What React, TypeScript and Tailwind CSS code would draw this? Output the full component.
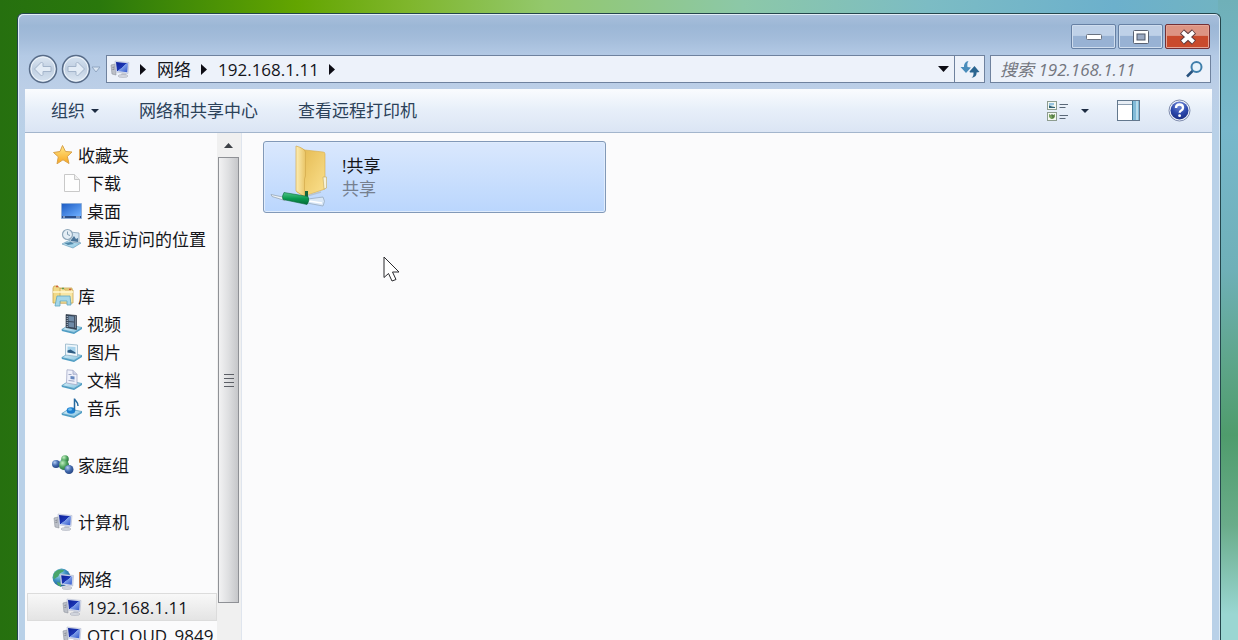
import React from 'react';

const IconDefs = () => (
  <svg className="absolute h-0 w-0" aria-hidden="true">
    <defs>
      <linearGradient id="screen" x1="0" y1="0" x2="1" y2="1">
        <stop offset="0" stopColor="#0b1f96" />
        <stop offset="0.5" stopColor="#1b35b4" />
        <stop offset="0.52" stopColor="#7f9fe8" />
        <stop offset="1" stopColor="#2f55cc" />
      </linearGradient>
      <linearGradient id="desk" x1="0" y1="0" x2="1" y2="1">
        <stop offset="0" stopColor="#1d5cc4" />
        <stop offset="1" stopColor="#6fb0ff" />
      </linearGradient>
      <linearGradient id="star" x1="0" y1="0" x2="0" y2="1">
        <stop offset="0" stopColor="#ffe98a" />
        <stop offset="1" stopColor="#f9a51e" />
      </linearGradient>
      <linearGradient id="tray" x1="0" y1="0" x2="1" y2="1">
        <stop offset="0" stopColor="#e3f5fc" />
        <stop offset="1" stopColor="#7fc0de" />
      </linearGradient>
      <linearGradient id="orb" x1="0" y1="0" x2="0" y2="1">
        <stop offset="0" stopColor="#dfe9f4" />
        <stop offset="0.5" stopColor="#c0cfe1" />
        <stop offset="1" stopColor="#d6e3f1" />
      </linearGradient>
      <linearGradient id="flap" x1="0" y1="0" x2="1" y2="0">
        <stop offset="0" stopColor="#fdeeb4" />
        <stop offset="1" stopColor="#e9c465" />
      </linearGradient>
      <linearGradient id="back" x1="0" y1="0" x2="1" y2="1">
        <stop offset="0" stopColor="#e2b64c" />
        <stop offset="1" stopColor="#fbe18e" />
      </linearGradient>
      <linearGradient id="pipe" x1="0" y1="0" x2="0" y2="1">
        <stop offset="0" stopColor="#4fc486" />
        <stop offset="0.5" stopColor="#0a9a50" />
        <stop offset="1" stopColor="#056b37" />
      </linearGradient>
      <radialGradient id="globe" cx="0.35" cy="0.3" r="0.8">
        <stop offset="0" stopColor="#a9e0f2" />
        <stop offset="0.5" stopColor="#3c8fc0" />
        <stop offset="1" stopColor="#164e86" />
      </radialGradient>
      <radialGradient id="blueBall" cx="0.35" cy="0.3" r="0.8">
        <stop offset="0" stopColor="#b4cdf3" />
        <stop offset="0.5" stopColor="#4169ad" />
        <stop offset="1" stopColor="#233f7b" />
      </radialGradient>
      <radialGradient id="greenBall" cx="0.35" cy="0.3" r="0.8">
        <stop offset="0" stopColor="#c2efc0" />
        <stop offset="0.5" stopColor="#4fa560" />
        <stop offset="1" stopColor="#27683b" />
      </radialGradient>
      <radialGradient id="help" cx="0.5" cy="0.2" r="0.8">
        <stop offset="0" stopColor="#7790dc" />
        <stop offset="0.6" stopColor="#2b47ab" />
        <stop offset="1" stopColor="#1b2f84" />
      </radialGradient>
    </defs>
  </svg>
);

const Computer = () => (
  <svg className="h-[22px] w-[22px] shrink-0" viewBox="0 0 22 22">
    <path d="M2 7l4-1 1 11-4-1z" fill="#bcc0c8" stroke="#8f949e" strokeWidth="0.6" />
    <path d="M3.500 9.500l2-.5M3.500 11.500l2-.5" stroke="#6b707b" strokeWidth="0.7" />
    <path d="M6 3l14 1.500-1 11L7 14z" fill="#dbe2f2" stroke="#b3bbd0" strokeWidth="0.6" />
    <path d="M7 4l12 1.200-.8 9L8 13z" fill="url(#screen)" />
    <path d="M13 14.500l4 .5.500 2.500h-6z" fill="#c6cbd6" />
    <ellipse cx="14" cy="18" rx="5" ry="1.500" fill="#d3d7df" stroke="#a4a9b5" strokeWidth="0.5" />
  </svg>
);

const Star = () => (
  <svg className="h-[22px] w-[22px] shrink-0" viewBox="0 0 22 22">
    <path d="M10.500 1.500l3 6 6.500.500-4.700 4.500 1.700 7-6-3.700-6 4 1.300-7L1.500 8.500l6.500-1z" fill="url(#star)" stroke="#d9a24a" strokeWidth="1" strokeLinejoin="round" />
  </svg>
);

const Page = () => (
  <svg className="h-[22px] w-[22px] shrink-0" viewBox="0 0 22 22">
    <path d="M3.500 2.500h10l5 5v12h-15z" fill="#fefefe" stroke="#c9c9c9" />
    <path d="M13.500 2.500v5h5" fill="#eee" stroke="#c9c9c9" />
  </svg>
);

const Desktop = () => (
  <svg className="h-[22px] w-[22px] shrink-0" viewBox="0 0 22 22">
    <path d="M.5 3.500h20v15h-20z" fill="#6f9bd6" stroke="#8eaed8" />
    <path d="M1 4h19v12H1z" fill="url(#desk)" />
    <path d="M1 16h19v2H1z" fill="#2c4f8a" />
    <path d="M2 17h2M15 17h4" stroke="#c9ddf5" />
  </svg>
);

const Recent = () => (
  <svg className="h-[22px] w-[22px] shrink-0" viewBox="0 0 22 22">
    <path d="M1 16l8-4 11 3-8 5z" fill="url(#tray)" stroke="#5d92b1" strokeWidth="0.6" />
    <path d="M9 4l9 1v10l-9-1z" fill="#d4e5f2" stroke="#87a2b8" strokeWidth="0.8" />
    <path d="M10 12l3-4 2 3 2-1v4l-7-1z" fill="#4a7599" />
    <circle cx="6.500" cy="6.500" r="5" fill="#e5eef5" stroke="#8fa7ba" strokeWidth="1.200" />
    <path d="M6.500 3.500v3l2.500 1" fill="none" stroke="#7f9bb0" />
    <path d="M3 15l7-1 3 2-6 1z" fill="#4f87a9" />
  </svg>
);

const Library = () => (
  <svg className="h-[24px] w-[22px] shrink-0" viewBox="0 0 22 24">
    <path d="M1 4l1-2h4l1 2h13v15H1z" fill="#f1d987" stroke="#c9a650" strokeWidth="0.8" />
    <path d="M8 7V4.500h4L13 6h4l1-1 3 1v13H8z" fill="#f8e6a4" stroke="#c9a650" strokeWidth="0.8" />
    <path d="M1 8h20" stroke="#fff7d2" strokeWidth="1.500" />
    <path d="M4 2.500h2" stroke="#cf5b3d" strokeWidth="1.500" />
    <path d="M10 4.500h2" stroke="#5c9c54" strokeWidth="1.500" />
    <path d="M17 5.500h2" stroke="#cf5b3d" strokeWidth="1.500" />
    <path d="M5 12h13l1 9h-4v-4H8v5H3z" fill="#a5d7e8" stroke="#5fa6c0" strokeWidth="0.8" />
  </svg>
);

const Tray = ({ children }: { children: React.ReactNode }) => (
  <svg className="h-[22px] w-[22px] shrink-0" viewBox="0 0 22 22">
    <path d="M.8 16.500L8 12l13 2.500-8 5z" fill="url(#tray)" stroke="#4e97bb" strokeWidth="0.7" />
    <path d="M.8 16.500l12.200 3 8-5v1.500l-8 5-12.200-3z" fill="#4d9cc3" />
    {children}
  </svg>
);

const Video = () => (
  <Tray>
    <path d="M5 1.500l10.500 1v14L5 14.500z" fill="#3b4a5e" stroke="#232d3b" strokeWidth="0.6" />
    <path d="M7.500 3l5.500.5v5l-5.500-.5zM7.500 9l5.500.5v5l-5.500-.8z" fill="#6f8ba8" />
    <path d="M6.200 3v11M14.400 3.500v12" stroke="#c3ccd8" strokeWidth="1" strokeDasharray="1 1" />
  </Tray>
);

const Picture = () => (
  <Tray>
    <path d="M4.500 3l12 1v11.500l-12-1.500z" fill="#eef6fb" stroke="#93b4c8" strokeWidth="0.8" />
    <path d="M6.500 5.500l8 .6v6.500l-8-1z" fill="#a7d3ec" />
    <path d="M6.500 9.500l3-1 5 3v1.200l-8-1.100z" fill="#2f5c83" />
  </Tray>
);

const Document = () => (
  <Tray>
    <path d="M6 .8l6 .5 4 4v10.500L5.500 14z" fill="#eef0fa" stroke="#a3a9c6" strokeWidth="0.8" />
    <path d="M12 1.300v4h4" fill="#cfd5ea" stroke="#a3a9c6" strokeWidth="0.8" />
    <path d="M7.500 5.500h3M7.500 11.500l6 .7" stroke="#9ca5c4" />
    <path d="M9.500 7l4 .5v3l-4-.5z" fill="#6586bd" />
  </Tray>
);

const Music = () => (
  <Tray>
    <ellipse cx="10" cy="13.500" rx="4.300" ry="3.300" fill="#1c7fd0" />
    <ellipse cx="9" cy="12.500" rx="2" ry="1.200" fill="#6bbcf0" />
    <path d="M13.500 13.500V1.500c.5 3 4 3 3.500 7.500" fill="none" stroke="#24699f" strokeWidth="1.500" />
  </Tray>
);

const Homegroup = () => (
  <svg className="h-[22px] w-[22px] shrink-0" viewBox="0 0 22 22">
    <path d="M4 10l8-4 5 8-6 1z" fill="none" stroke="#9fc7d8" strokeWidth="2.500" />
    <circle cx="13" cy="5" r="3.800" fill="url(#greenBall)" />
    <circle cx="4" cy="10" r="4" fill="url(#blueBall)" />
    <circle cx="12" cy="11" r="5" fill="url(#greenBall)" />
    <circle cx="17" cy="15.500" r="4.500" fill="url(#blueBall)" />
  </svg>
);

const Network = () => (
  <svg className="h-[22px] w-[22px] shrink-0" viewBox="0 0 22 22">
    <circle cx="9.500" cy="9.500" r="9" fill="url(#globe)" />
    <path d="M2 5c3-4 7-4 10-3-1 3-4 2-5 5s-4 2-5 5c-1-2-1-5 0-7zM5 14l4 1v4c-2-1-4-2-4-5z" fill="#49a66a" />
    <path d="M8 6l13.500 1.500-.8 10.500L9 16.500z" fill="#dbe2f2" stroke="#a8b2ca" strokeWidth="0.6" />
    <path d="M9.200 7.200l11.200 1.200-.7 8.400-9.700-1.200z" fill="url(#screen)" />
    <ellipse cx="15" cy="20" rx="5" ry="1.500" fill="#d3d7df" stroke="#a4a9b5" strokeWidth="0.5" />
  </svg>
);

const SharedFolder = () => (
  <svg className="h-[64px] w-[60px] shrink-0" viewBox="0 0 60 64">
    <path d="M27 2l8 3 18 2q2 0 2 2v35l-20 7-8-4z" fill="url(#back)" stroke="#d9ad48" strokeWidth="0.6" />
    <path d="M53 32h3.500v11L54 44z" fill="#f6f2da" stroke="#c3a75d" strokeWidth="0.6" />
    <path d="M26 1q8 2 9.500 6v24l-1 3v18L26 46z" fill="url(#flap)" stroke="#d3aa4d" strokeWidth="0.7" />
    <path d="M37 51l14-4" stroke="#b7c4d0" strokeWidth="1.500" />
    <path d="M35 46h3v7h-3z" fill="#14653c" />
    <path d="M1 49.500l14 3v3l-13-4z" fill="#eef3f7" stroke="#8f9fae" strokeWidth="0.7" />
    <path d="M38 54l15-2q3 4 0 9l-16-3z" fill="#dfeaf4" fillOpacity="0.8" stroke="#97abc0" strokeWidth="0.8" />
    <path d="M39 56l13 2" stroke="#fff" strokeWidth="1.500" />
    <path d="M14 47.500l24 4q2 4-1 8l-24-5q-1.500-3 1-7z" fill="url(#pipe)" stroke="#08693a" strokeWidth="0.6" />
  </svg>
);

const Right = () => (
  <svg className="h-[11px] w-[7px]" viewBox="0 0 7 11">
    <path d="M0 0l6 5.500L0 11z" fill="#0c0c14" />
  </svg>
);

const Down = () => (
  <svg className="h-[4px] w-[8px]" viewBox="0 0 8 4">
    <path d="M0 0h8L4 4z" fill="#1d2c42" />
  </svg>
);

const Arrow = ({ flip }: { flip?: boolean }) => (
  <svg className={flip ? 'h-[30px] w-[30px] rotate-180' : 'h-[30px] w-[30px]'} viewBox="0 0 30 30">
    <circle cx="15" cy="15" r="13.500" fill="url(#orb)" stroke="#586c88" strokeWidth="1.500" />
    <circle cx="15" cy="15" r="12" fill="none" stroke="#eef4fa" strokeWidth="1" />
    <path d="M6.500 15l7-7 1.500 1.500v3h8v5h-8v3L13.500 22z" fill="#e3ecf6" stroke="#a3b4ca" strokeWidth="1" strokeLinejoin="round" />
  </svg>
);

type Item = { label: string; icon: React.FC; selected?: boolean };

const groups: { label: string; icon: React.FC; items: Item[] }[] = [
  {
    label: '收藏夹',
    icon: Star,
    items: [
      { label: '下载', icon: Page },
      { label: '桌面', icon: Desktop },
      { label: '最近访问的位置', icon: Recent },
    ],
  },
  {
    label: '库',
    icon: Library,
    items: [
      { label: '视频', icon: Video },
      { label: '图片', icon: Picture },
      { label: '文档', icon: Document },
      { label: '音乐', icon: Music },
    ],
  },
  { label: '家庭组', icon: Homegroup, items: [] },
  { label: '计算机', icon: Computer, items: [] },
  {
    label: '网络',
    icon: Network,
    items: [
      { label: '192.168.1.11', icon: Computer, selected: true },
      { label: 'QTCLOUD_9849', icon: Computer },
    ],
  },
];

const TitleBar = () => (
  <div className="flex justify-end gap-[2px] pr-[2px] pt-[10px]">
    <button aria-label="最小化" className="flex h-[25px] w-[45px] items-center justify-center rounded-[2px] border border-[#6680a4] bg-linear-to-b from-[#bfd1e8] from-45% to-[#98b2d4] to-50% shadow-[inset_0_0_0_1px_#cfddee]">
      <svg className="h-[6px] w-[16px]" viewBox="0 0 16 6">
        <rect x="0.5" y="0.5" width="15" height="5" rx="1" fill="#fff" stroke="#6a7280" />
      </svg>
    </button>
    <button aria-label="最大化" className="flex h-[25px] w-[45px] items-center justify-center rounded-[2px] border border-[#6680a4] bg-linear-to-b from-[#bfd1e8] from-45% to-[#98b2d4] to-50% shadow-[inset_0_0_0_1px_#cfddee]">
      <svg className="h-[14px] w-[16px]" viewBox="0 0 16 14">
        <rect x="0.5" y="0.5" width="15" height="13" rx="1" fill="#fff" stroke="#5a6272" />
        <rect x="4" y="4" width="8" height="6" fill="#9aa9c2" stroke="#4f586a" />
      </svg>
    </button>
    <button aria-label="关闭" className="flex h-[25px] w-[45px] items-center justify-center rounded-[2px] border border-[#732f35] bg-linear-to-b from-[#dd9483] from-45% to-[#c94a2c] to-50% shadow-[inset_0_0_0_1px_#e4a596]">
      <svg className="h-[16px] w-[18px]" viewBox="0 0 18 16">
        <path d="M3 2.500l12 11M15 2.500l-12 11" stroke="#5d3a3e" strokeWidth="6" />
        <path d="M3.500 3l11 10M14.500 3l-11 10" stroke="#fff" strokeWidth="4" />
      </svg>
    </button>
  </div>
);

const NavBar = () => (
  <div className="mt-[6px] flex h-[28px] items-center pl-[3px] pr-px">
    <button aria-label="后退"><Arrow /></button>
    <button aria-label="前进" className="ml-[3px]"><Arrow flip /></button>
    <button aria-label="最近页面" className="mr-[5px]">
      <svg className="h-[7px] w-[10px]" viewBox="0 0 10 7">
        <path d="M1 1h8L5 6z" fill="#dbe7f4" stroke="#90a6c2" />
      </svg>
    </button>
    <div className="flex h-[28px] min-w-0 flex-1 border border-[#6f829e] bg-[#edf2fa]">
      <div className="flex min-w-0 flex-1 items-center pl-[2px]">
        <Computer />
        <div className="ml-[9px] flex items-center gap-[10px]">
          <Right />
          <button>网络</button>
          <Right />
          <button>192.168.1.11</button>
          <Right />
        </div>
      </div>
      <button aria-label="以前的位置" className="px-[5px]">
        <svg className="h-[6px] w-[11px]" viewBox="0 0 11 6">
          <path d="M0 0h11L5.500 6z" fill="#0c0c14" />
        </svg>
      </button>
      <button aria-label="刷新" className="flex w-[30px] items-center justify-center border-l border-[#6f829e]">
        <svg className="h-[20px] w-[20px]" viewBox="0 0 20 20">
          <path d="M8.500 2C6 2.500 4 4 4 8H.5l5.500 6 5-5.500-3.500-.5C7 5 7.500 3.500 8.500 2z" fill="#4a8dbb" />
          <path d="M11.500 18.500c2-1 2-2.500 2-5H10l-.5-1L14.500 7l5 6-3 .5c.5 3-2 5-5 5z" fill="#2b6590" />
        </svg>
      </button>
    </div>
    <label className="ml-[5px] flex h-[28px] w-[221px] shrink-0 items-center border border-[#6f829e] bg-[#edf2fa] pl-[9px] pr-[6px]">
      <input type="search" aria-label="搜索" placeholder="搜索 192.168.1.11" className="min-w-0 flex-1 bg-transparent italic outline-none placeholder:text-[#74777f]" />
      <svg className="h-[19px] w-[19px] shrink-0" viewBox="0 0 19 19">
        <circle cx="11.500" cy="7" r="5" fill="#e7f3fb" stroke="#3f7fab" strokeWidth="2" />
        <path d="M7.500 11L2 16.500" stroke="#27527e" strokeWidth="2.500" />
      </svg>
    </label>
  </div>
);

const Toolbar = () => (
  <div className="mt-[6px] flex h-[44px] items-center gap-10 border-b border-[#a3b5cc] bg-linear-to-b from-[#fafcfe] via-[#e7eff9] via-48% to-[#dbe5f4] pl-[26px] pr-[21px] text-[#2b4159]">
    <button className="flex items-center gap-[6px]">组织<Down /></button>
    <button>网络和共享中心</button>
    <button>查看远程打印机</button>
    <div className="ml-auto flex items-center gap-7">
      <button aria-label="更改视图" className="flex items-center gap-[12px]">
        <svg className="h-[20px] w-[22px]" viewBox="0 0 22 20">
          <rect x="0.5" y="0.500" width="9" height="8" fill="#f4f8f2" stroke="#8e9d90" />
          <path d="M2 2h5v2L2 5z" fill="#98c4df" />
          <path d="M2 7V4.500l3 1 3 .5v1z" fill="#2f6174" />
          <rect x="0.5" y="11.500" width="9" height="8" fill="#f4f8f2" stroke="#8e9d90" />
          <path d="M2 13l3 1.500L8 13v3l-2 2H4l-2-2z" fill="#76a15c" />
          <path d="M4 14h2v3" fill="none" stroke="#3f5e36" />
          <path d="M12.500 3.500H21M12.500 6.500h6M12.500 14.500H21M12.500 17.500h6" stroke="#5a6878" />
        </svg>
        <Down />
      </button>
      <button aria-label="显示预览窗格">
        <svg className="h-[21px] w-[23px]" viewBox="0 0 23 21">
          <rect x="0.5" y="0.500" width="22" height="20" fill="#fff" stroke="#63788d" />
          <path d="M1 1h14v3H1z" fill="#e8eef5" />
          <path d="M1 4.500h14" stroke="#8d9fb1" />
          <path d="M15 1h7v19h-7z" fill="#82bbd8" />
          <path d="M15.500 1v19" stroke="#3f7996" />
          <path d="M20 1v19" stroke="#b7dcec" strokeWidth="2" />
        </svg>
      </button>
      <button aria-label="帮助">
        <svg className="h-[23px] w-[23px]" viewBox="0 0 23 23">
          <circle cx="11.500" cy="11.500" r="10.500" fill="#eef2fa" stroke="#7f8cad" />
          <circle cx="11.500" cy="11.500" r="9" fill="url(#help)" />
          <path d="M8 9q0-3.500 3.500-3.500T15 8.700q0 1.800-1.800 2.800-1.500.800-1.500 2.300" fill="none" stroke="#fff" strokeWidth="2.300" />
          <circle cx="11.600" cy="16.700" r="1.400" fill="#fff" />
        </svg>
      </button>
    </div>
  </div>
);

const Sidebar = () => (
  <nav className="flex w-[192px] shrink-0 flex-col gap-[29px] overflow-hidden pl-[2px] pt-2">
    {groups.map(({ label, icon: Icon, items }) => (
      <ul key={label}>
        <li>
          <a href="#" className="flex h-[28px] items-center gap-1 whitespace-nowrap pl-[25px]">
            <Icon />
            {label}
          </a>
        </li>
        {items.map(({ label: name, icon: ItemIcon, selected }) => (
          <li key={name}>
            <a
              href="#"
              className={
                selected
                  ? 'flex h-[28px] items-center gap-1 whitespace-nowrap border border-[#dcdcdc] bg-linear-to-b from-[#f8f8f8] to-[#e4e4e4] pl-[33px]'
                  : 'flex h-[28px] items-center gap-1 whitespace-nowrap pl-[34px]'
              }
            >
              <ItemIcon />
              {name}
            </a>
          </li>
        ))}
      </ul>
    ))}
  </nav>
);

const ScrollBar = () => (
  <div className="flex w-[25px] shrink-0 flex-col border-r border-[#dfe5ee] bg-[#f0f0f0] pl-px pr-[2px]">
    <button aria-label="向上滚动" className="flex h-[24px] items-center justify-center">
      <svg className="h-[5px] w-[9px]" viewBox="0 0 9 5">
        <path d="M0 5h9L4.500 0z" fill="#3d4147" />
      </svg>
    </button>
    <div className="flex h-[88%] flex-col items-center justify-center gap-[3px] border border-[#8f9196] bg-linear-to-r from-[#f2f2f3] via-[#dedfe1] via-50% to-[#c6c7ca]">
      <span className="h-px w-[10px] bg-[#5c5f66]" />
      <span className="h-px w-[10px] bg-[#5c5f66]" />
      <span className="h-px w-[10px] bg-[#5c5f66]" />
      <span className="h-px w-[10px] bg-[#5c5f66]" />
    </div>
  </div>
);

const App: React.FC = () => {
  return (
    <div className="flex h-screen flex-col overflow-hidden [background:linear-gradient(to_bottom,#6fb0b8_0%,#78b8cc_20%,#6fb0b8_42%,#5fa68c_56%,#4f9c6c_68%,#6aac8a_82%,#9ad6d2_96%)_right/20px_100%_no-repeat,linear-gradient(to_right,#26700f_0%,#2a780c_8%,#63a500_24%,#7fb62c_33%,#93c86c_44%,#8cc8a8_60%,#7cbcc4_75%,#6cb0cc_90%,#72b4c0_100%)] px-[17px] pt-[13px] font-['Open_Sans','Noto_Sans_CJK_SC',sans-serif] text-[17px] leading-[23px] text-[#15161a]">
      <IconDefs />
      <div className="flex min-h-0 flex-1 flex-col rounded-t-[6px] border border-b-0 border-[#24464c] bg-[#b9d1e8] bg-[linear-gradient(to_bottom,#a9bfdc_0px,#9cb7d6_12px,#a3bcda_24px,#b4cae5_42px,#bccfe7_75px,#b9d1e8_120px)] pl-[7px] pr-[8px] shadow-[inset_1px_1px_0_#e2edf7,inset_-1px_0_0_#d8e8f4]">
        <TitleBar />
        <NavBar />
        <Toolbar />
        <div className="flex min-h-0 flex-1 bg-[#fbfbfc]">
          <Sidebar />
          <ScrollBar />
          <main className="relative min-w-0 flex-1 pl-[21px] pt-[8px]">
            <button className="flex h-[72px] w-[343px] items-center gap-[12px] rounded-[3px] border border-[#8299b8] bg-linear-to-b from-[#dae8fd] to-[#bad6fd] pl-[6px] text-left shadow-[inset_0_0_0_1px_#e0ecfc]">
              <SharedFolder />
              <span>
                <span className="block">!共享</span>
                <span className="block text-[#76808f]">共享</span>
              </span>
            </button>
            <svg className="absolute left-[141px] top-[123px] h-[26px] w-[18px]" viewBox="0 0 18 26">
              <path d="M1 1v20.500l4.500-4 3.500 7.500 4-1.500-3.500-7.500H16z" fill="#fff" stroke="#2a2a2e" strokeLinejoin="round" />
            </svg>
          </main>
        </div>
      </div>
    </div>
  );
};

export default App;
